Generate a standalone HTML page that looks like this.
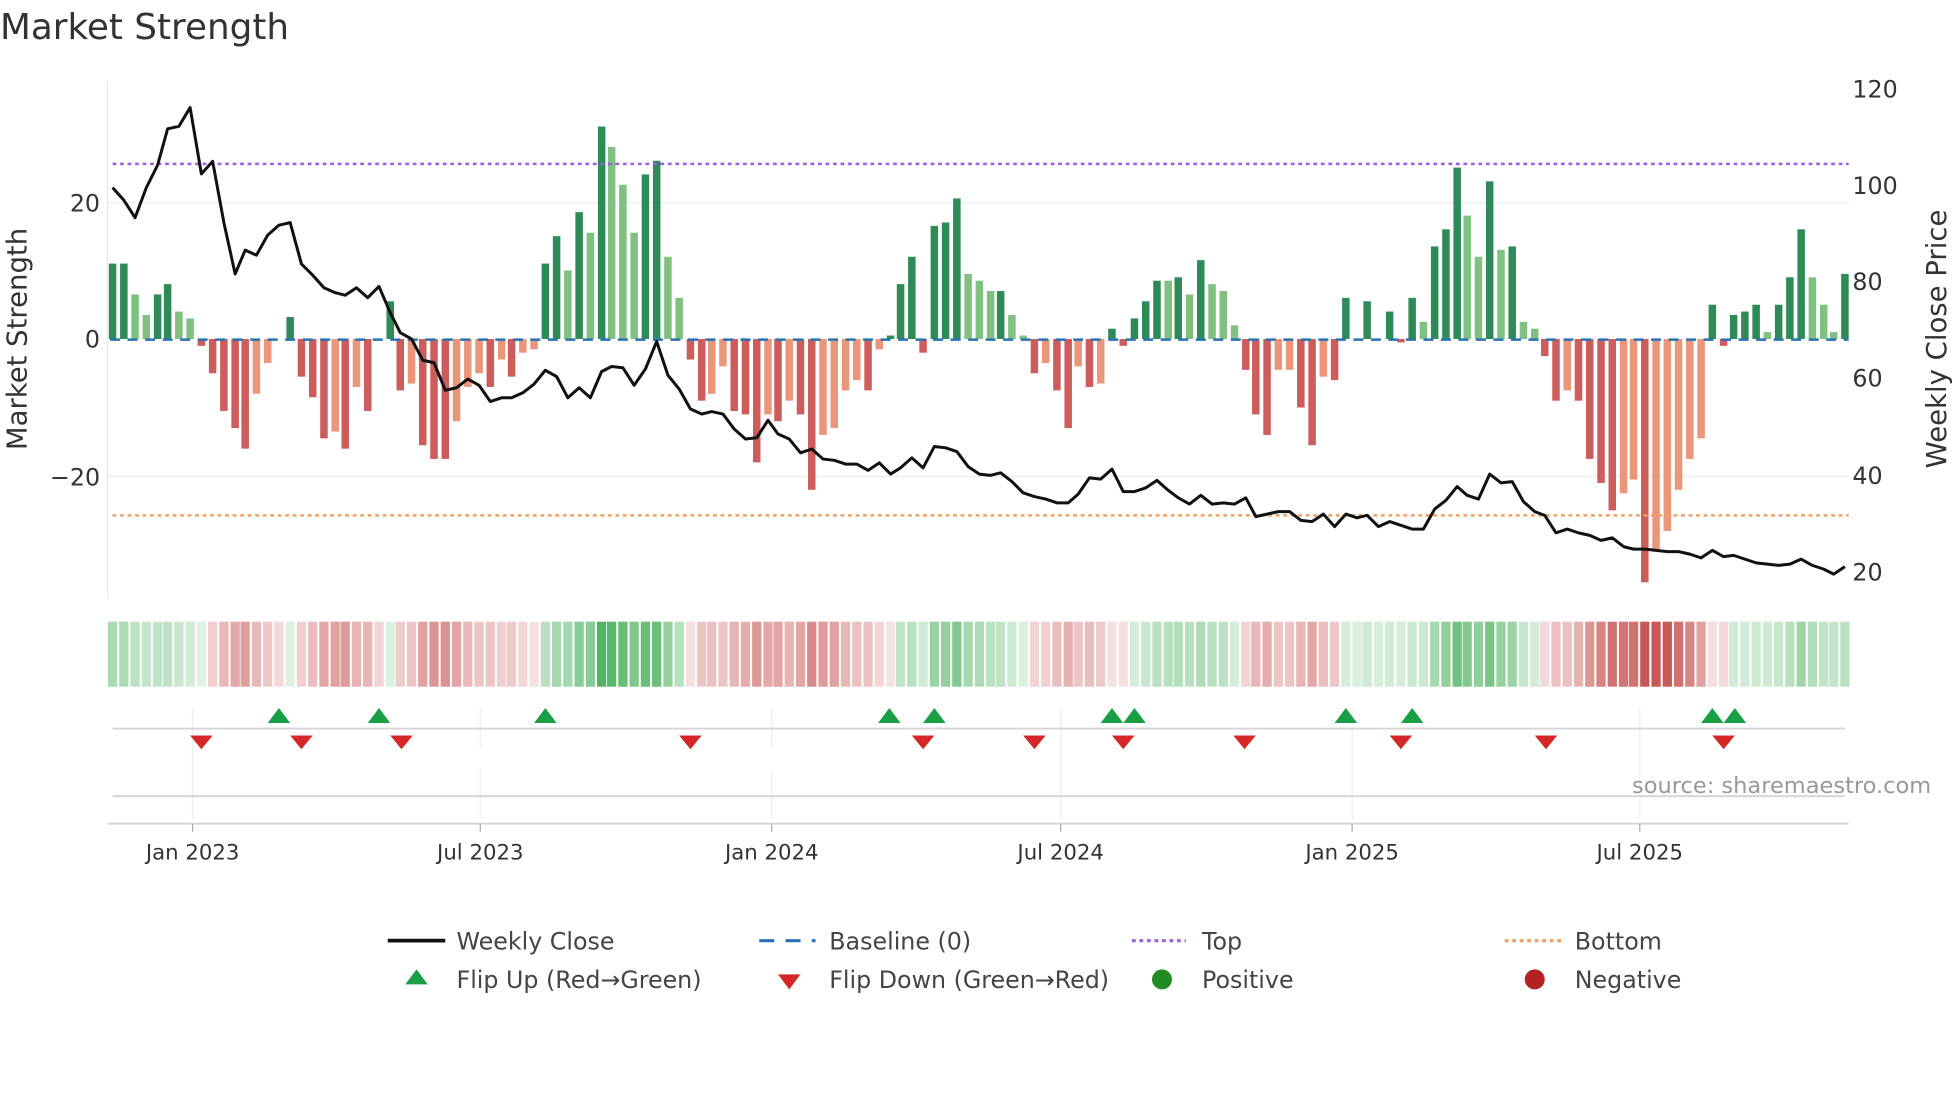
<!DOCTYPE html>
<html><head><meta charset="utf-8"><style>
html,body{margin:0;padding:0;background:#fff;}
svg{display:block;}
text{font-family:"DejaVu Sans","Liberation Sans",sans-serif;}
</style></head><body>
<svg id="s" width="1960" height="1102" viewBox="0 0 1567 881" preserveAspectRatio="none" xmlns="http://www.w3.org/2000/svg">
<rect width="1567" height="881" fill="#fff"/>
<text x="0" y="31" font-size="28.6" fill="#333">Market Strength</text>
<line x1="86" y1="65" x2="86" y2="478" stroke="#e8e8e8" stroke-width="1"/>
<line x1="86" y1="162" x2="1478" y2="162" stroke="#eef0f2" stroke-width="1.5"/>
<line x1="86" y1="381" x2="1478" y2="381" stroke="#eef0f2" stroke-width="1.5"/>
<g id="bars"></g>
<line x1="90" y1="131" x2="1478" y2="131" stroke="#9b5de5" stroke-width="2" stroke-dasharray="3,3"/>
<line x1="90" y1="412" x2="1478" y2="412" stroke="#f0a060" stroke-width="2" stroke-dasharray="3,3"/>
<line x1="88" y1="271.5" x2="1478" y2="271.5" stroke="#2a73b0" stroke-width="2" stroke-dasharray="8,6"/>
<polyline id="price" fill="none" stroke="#111" stroke-width="2.4" stroke-linejoin="round"/>
<g font-size="19" fill="#333">
<text x="80" y="169" text-anchor="end">20</text>
<text x="80" y="278" text-anchor="end">0</text>
<text x="80" y="388" text-anchor="end">−20</text>
<text x="1481" y="78">120</text>
<text x="1481" y="155">100</text>
<text x="1481" y="232">80</text>
<text x="1481" y="309">60</text>
<text x="1481" y="387">40</text>
<text x="1481" y="464">20</text>
</g>
<text transform="translate(21,271) rotate(-90)" text-anchor="middle" font-size="22" fill="#333">Market Strength</text>
<text transform="translate(1556,271) rotate(-90)" text-anchor="middle" font-size="22" fill="#333">Weekly Close Price</text>
<g id="heat"></g>
<g stroke="#eef0f2" stroke-width="1.2">
<line x1="154" y1="566" x2="154" y2="655"/><line x1="384" y1="566" x2="384" y2="598"/><line x1="617" y1="566" x2="617" y2="598"/><line x1="848" y1="566" x2="848" y2="655"/><line x1="1081" y1="566" x2="1081" y2="655"/><line x1="1311" y1="566" x2="1311" y2="655"/>
<line x1="384" y1="615" x2="384" y2="655"/><line x1="617" y1="615" x2="617" y2="655"/>
</g>
<line x1="90" y1="582.5" x2="1475" y2="582.5" stroke="#d4d4d4" stroke-width="1.5"/>
<line x1="90" y1="636.5" x2="1475" y2="636.5" stroke="#d4d4d4" stroke-width="1.5"/>
<line x1="86" y1="658.5" x2="1478" y2="658.5" stroke="#d4d4d4" stroke-width="1.5"/>
<g id="marks"></g>
<g stroke="#aaa" stroke-width="1"><line x1="154" y1="659" x2="154" y2="665"/><line x1="384" y1="659" x2="384" y2="665"/><line x1="617" y1="659" x2="617" y2="665"/><line x1="848" y1="659" x2="848" y2="665"/><line x1="1081" y1="659" x2="1081" y2="665"/><line x1="1311" y1="659" x2="1311" y2="665"/></g>
<g font-size="17" fill="#333" text-anchor="middle">
<text x="154" y="687">Jan 2023</text><text x="384" y="687">Jul 2023</text><text x="617" y="687">Jan 2024</text><text x="848" y="687">Jul 2024</text><text x="1081" y="687">Jan 2025</text><text x="1311" y="687">Jul 2025</text>
</g>
<text x="1544" y="634" text-anchor="end" font-size="18" fill="#999">source: sharemaestro.com</text>
<g font-size="19" fill="#444">
<line x1="310" y1="752" x2="356" y2="752" stroke="#111" stroke-width="3"/>
<text x="365" y="759">Weekly Close</text>
<line x1="607" y1="752" x2="652" y2="752" stroke="#2a73b0" stroke-width="2.5" stroke-dasharray="12,9"/>
<text x="663" y="759">Baseline (0)</text>
<line x1="905" y1="752" x2="948" y2="752" stroke="#9b5de5" stroke-width="2.5" stroke-dasharray="3,3"/>
<text x="961" y="759">Top</text>
<line x1="1203" y1="752" x2="1248" y2="752" stroke="#f0a060" stroke-width="2.5" stroke-dasharray="3,3"/>
<text x="1259" y="759">Bottom</text>
<polygon points="333,775 342,787 324,787" fill="#1a9e46"/>
<text x="365" y="790">Flip Up (Red→Green)</text>
<polygon points="622,779 640,779 631,791" fill="#d62728"/>
<text x="663" y="790">Flip Down (Green→Red)</text>
<circle cx="929" cy="783" r="8" fill="#228b22"/>
<text x="961" y="790">Positive</text>
<circle cx="1227" cy="783" r="8" fill="#b22222"/>
<text x="1259" y="790">Negative</text>
</g>
</svg>
<script>
var NS="http://www.w3.org/2000/svg";
function el(t,a,p){var e=document.createElementNS(NS,t);for(var k in a)e.setAttribute(k,a[k]);p.appendChild(e);return e;}
var B=[[90,11,1],[99,11,1],[108,6.5,0],[117,3.5,0],[126,6.5,1],[134,8,1],[143,4,0],[152,3,0],[161,-1,1],[170,-5,1],[179,-10.5,1],[188,-13,1],[196,-16,1],[205,-8,0],[214,-3.5,0],[223,0,0],[232,3.2,1],[241,-5.5,1],[250,-8.5,1],[259,-14.5,1],[268,-13.5,0],[276,-16,1],[285,-7,0],[294,-10.5,1],[303,0,0],[312,5.5,1],[320,-7.5,1],[329,-6.5,0],[338,-15.5,1],[347,-17.5,1],[356,-17.5,1],[365,-12,0],[374,-7,0],[383,-5,0],[392,-7,1],[401,-3,0],[409,-5.5,1],[418,-2,0],[427,-1.5,0],[436,11,1],[445,15,1],[454,10,0],[463,18.5,1],[472,15.5,0],[481,31,1],[489,28,0],[498,22.5,0],[507,15.5,0],[516,24,1],[525,26,1],[534,12,0],[543,6,0],[552,-3,1],[561,-9,1],[569,-8,0],[578,-4,0],[587,-10.5,1],[596,-11,1],[605,-18,1],[614,-11,0],[622,-12,1],[631,-9,0],[640,-11,1],[649,-22,1],[658,-14,0],[667,-13,0],[676,-7.5,0],[685,-6,0],[694,-7.5,1],[703,-1.5,0],[712,0.5,1],[720,8,1],[729,12,1],[738,-2,1],[747,16.5,1],[756,17,1],[765,20.5,1],[774,9.5,0],[783,8.5,0],[792,7,0],[800,7,1],[809,3.5,0],[818,0.5,0],[827,-5,1],[836,-3.5,0],[845,-7.5,1],[854,-13,1],[862,-4,0],[871,-7,1],[880,-6.5,0],[889,1.5,1],[898,-1,1],[907,3,1],[916,5.5,1],[925,8.5,1],[934,8.5,0],[942,9,1],[951,6.5,0],[960,11.5,1],[969,8,0],[978,7,0],[987,2,0],[996,-4.5,1],[1004,-11,1],[1013,-14,1],[1022,-4.5,0],[1031,-4.5,0],[1040,-10,1],[1049,-15.5,1],[1058,-5.5,0],[1067,-6,1],[1076,6,1],[1085,0,0],[1093,5.5,1],[1102,0,0],[1111,4,1],[1120,-0.5,1],[1129,6,1],[1138,2.5,0],[1147,13.5,1],[1156,16,1],[1165,25,1],[1173,18,0],[1182,12,0],[1191,23,1],[1200,13,0],[1209,13.5,1],[1218,2.5,0],[1227,1.5,0],[1235,-2.5,1],[1244,-9,1],[1253,-7.5,0],[1262,-9,1],[1271,-17.5,1],[1280,-21,1],[1289,-25,1],[1298,-22.5,0],[1306,-20.5,0],[1315,-35.5,1],[1324,-31,0],[1333,-28,0],[1342,-22,0],[1351,-17.5,0],[1360,-14.5,0],[1369,5,1],[1378,-1,1],[1386,3.5,1],[1395,4,1],[1404,5,1],[1413,1,0],[1422,5,1],[1431,9,1],[1440,16,1],[1449,9,0],[1458,5,0],[1466,1,0],[1475,9.5,1]];
var bars=document.getElementById('bars'),heat=document.getElementById('heat');
B.forEach(function(b,i){
 var x=b[0],v=b[1],d=b[2],h=Math.abs(v)*5.48,y=v>=0?271-h:271;
 var c=v>=0?(d?'#2e8b57':'#80c080'):(d?'#cd5c5c':'#e9967a');
 if(h>0.3)el('rect',{x:x-3,y:y,width:6,height:h,fill:c},bars);
 var s=0,n=0;for(var j=Math.max(0,i-2);j<=Math.min(B.length-1,i+1);j++){s+=B[j][1];n++;}
 s/=n; if(Math.abs(v)>1) s=(s+v)/2;
 var a=Math.min(0.15+Math.abs(s)/28*0.75,0.9);
 var col=s>=0?'rgba(60,170,80,'+a.toFixed(2)+')':'rgba(195,70,70,'+a.toFixed(2)+')';
 el('rect',{x:x-3.7,y:497,width:7.4,height:52,fill:col},heat);
});
var P=[[90,150],[99,160],[108,174],[117,150],[126,132],[134,103],[143,101],[152,86],[161,139],[170,129],[179,178],[188,219],[196,200],[205,204],[214,188],[223,180],[232,178],[241,211],[250,220],[259,230],[268,234],[276,236],[285,230],[294,238],[303,229],[312,250],[320,266],[329,271],[338,288],[347,290],[356,312],[365,310],[374,303],[383,308],[392,321],[401,318],[409,318],[418,314],[427,307],[436,296],[445,301],[454,318],[463,310],[472,318],[481,297],[489,293],[498,294],[507,308],[516,295],[525,273],[534,300],[543,311],[552,327],[561,331],[569,329],[578,331],[587,343],[596,351],[605,350],[614,336],[622,347],[631,351],[640,362],[649,359],[658,367],[667,368],[676,371],[685,371],[694,376],[703,370],[712,379],[720,374],[729,366],[738,374],[747,357],[756,358],[765,361],[774,373],[783,379],[792,380],[800,378],[809,385],[818,394],[827,397],[836,399],[845,402],[854,402],[862,395],[871,382],[880,383],[889,375],[898,393],[907,393],[916,390],[925,384],[934,392],[942,398],[951,403],[960,396],[969,403],[978,402],[987,403],[996,398],[1004,413],[1013,411],[1022,409],[1031,409],[1040,416],[1049,417],[1058,411],[1067,421],[1076,411],[1085,414],[1093,412],[1102,421],[1111,417],[1120,420],[1129,423],[1138,423],[1147,407],[1156,400],[1165,389],[1173,396],[1182,399],[1191,379],[1200,386],[1209,385],[1218,401],[1227,409],[1235,412],[1244,426],[1253,423],[1262,426],[1271,428],[1280,432],[1289,430],[1298,437],[1306,439],[1315,439],[1324,440],[1333,441],[1342,441],[1351,443],[1360,446],[1369,440],[1378,445],[1386,444],[1395,447],[1404,450],[1413,451],[1422,452],[1431,451],[1440,447],[1449,452],[1458,455],[1466,459],[1475,453]];
document.getElementById('price').setAttribute('points',P.map(function(p){return p.join(',')}).join(' '));
var marks=document.getElementById('marks');
[223,303,436,711,747,889,907,1076,1129,1369,1387].forEach(function(x){el('polygon',{points:(x)+',566 '+(x+9)+',578 '+(x-9)+',578',fill:'#1a9e46'},marks);});
[161,241,321,552,738,827,898,995,1120,1236,1378].forEach(function(x){el('polygon',{points:(x-9)+',588 '+(x+9)+',588 '+x+',599',fill:'#d62728'},marks);});
</script>
</body></html>
